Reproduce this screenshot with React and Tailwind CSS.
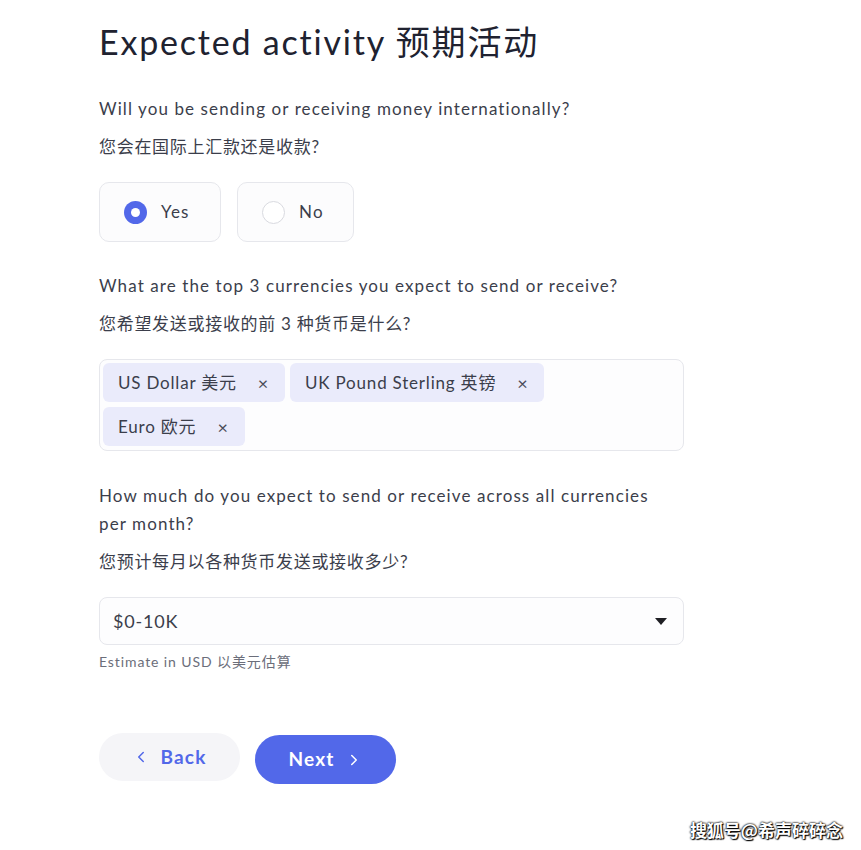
import { ChevronLeft, ChevronRight } from 'lucide-react'

const font = { fontFamily: 'Lato, "Noto Sans CJK SC", sans-serif' }

const tags = ['US Dollar 美元', 'UK Pound Sterling 英镑', 'Euro 欧元']

function Question({ en, zh, className = '' }) {
  return (
    <div className={`text-[17px] text-[#3b3e4b] tracking-[1.1px] ${className}`}>
      <p className="leading-[28px]">{en}</p>
      <p className="mt-[10px] leading-[28px] tracking-[0.7px]">{zh}</p>
    </div>
  )
}

export default function App() {
  return (
    <div className="relative min-h-[850px] bg-white" style={font}>
      <div className="pl-[99px] pt-[20px] w-[684px]">
        <h1 className="text-[34px] leading-[44px] text-[#202230] tracking-[1.8px]">Expected activity 预期活动</h1>

        <div className="mt-[31px]">
          <Question en="Will you be sending or receiving money internationally?" zh="您会在国际上汇款还是收款?" />
        </div>

        {/* Yes / No */}
        <div className="mt-[21px] flex gap-4">
          <div className="w-[122px] h-[60px] rounded-[10px] border border-[#e6e7ec] bg-[#fcfcfd] flex items-center pl-[24px] gap-[14px]">
            <span className="w-[23px] h-[23px] rounded-full bg-[#5268e9] flex items-center justify-center">
              <span className="w-[9px] h-[9px] rounded-full bg-white" />
            </span>
            <span className="text-[17px] text-[#3b3e4b] tracking-[1.2px]">Yes</span>
          </div>
          <div className="w-[117px] h-[60px] rounded-[10px] border border-[#e6e7ec] bg-[#fcfcfd] flex items-center pl-[24px] gap-[14px]">
            <span className="w-[23px] h-[23px] rounded-full border border-[#d9dae0] bg-white" />
            <span className="text-[17px] text-[#3b3e4b] tracking-[1.2px]">No</span>
          </div>
        </div>

        <div className="mt-[30px]">
          <Question en="What are the top 3 currencies you expect to send or receive?" zh="您希望发送或接收的前 3 种货币是什么?" />
        </div>

        {/* Currency tags */}
        <div className="mt-[21px] h-[92px] rounded-[8px] border border-[#e6e7ec] bg-[#fdfdfe] p-[3px] flex flex-wrap content-start gap-[5px]">
          {tags.map((t) => (
            <div key={t} className="h-[39px] rounded-[6px] bg-[#eaebfb] flex items-center pl-[15px] pr-[16px] gap-[21px] text-[17px] text-[#3b3e4b] tracking-[0.8px]">
              <span>{t}</span>
              <span className="text-[18px] text-[#4a4d5a] leading-none">×</span>
            </div>
          ))}
        </div>

        <Question
          className="mt-[31px] w-[575px]"
          en="How much do you expect to send or receive across all currencies per month?"
          zh="您预计每月以各种货币发送或接收多少?"
        />

        {/* Select */}
        <div className="mt-[21px] h-[48px] rounded-[8px] border border-[#e6e7ec] bg-[#fdfdfe] flex items-center justify-between pl-[13px] pr-[16px]">
          <span className="text-[18px] text-[#3b3e4b] tracking-[0.8px]">$0-10K</span>
          <svg width="12" height="7" viewBox="0 0 12 7">
            <path d="M0 0h12L6 7z" fill="#1f1f24" />
          </svg>
        </div>
        <p className="mt-[6px] text-[14px] text-[#6b6e7a] tracking-[0.9px]">Estimate in USD 以美元估算</p>

        {/* Buttons */}
        <div className="mt-[61px] flex items-start gap-[15px]">
          <button className="w-[141px] h-[48px] rounded-full bg-[#f5f5f8] text-[#5268e9] font-bold text-[19px] flex items-center justify-center gap-[10px] tracking-[1.2px]">
            <ChevronLeft size={18} strokeWidth={2} />
            Back
          </button>
          <button className="mt-[2px] w-[141px] h-[49px] rounded-full bg-[#5268e9] text-white font-bold text-[19px] flex items-center justify-center gap-[10px] tracking-[1.2px]">
            Next
            <ChevronRight size={18} strokeWidth={2} />
          </button>
        </div>
      </div>

      <div
        className="absolute right-[18px] bottom-[8px] text-[17px] font-bold text-white"
        style={{ fontFamily: '"Noto Sans CJK SC", sans-serif', textShadow: '0 0 2px #000, 0 0 2px #000, 1px 1px 1px #000' }}
      >
        搜狐号@希声碎碎念
      </div>
    </div>
  )
}
